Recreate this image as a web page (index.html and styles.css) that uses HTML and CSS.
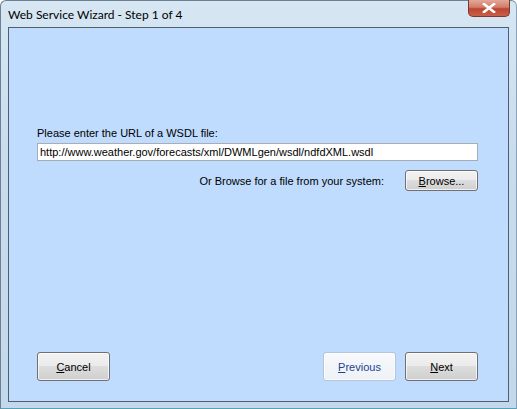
FILE: index.html
```html
<!DOCTYPE html>
<html lang="en">
<head>
  <meta charset="UTF-8">
  <title>Web Service Wizard</title>
  <link rel="stylesheet" href="styles.css">
</head>
<body>
  <div class="window">
    <div class="titlebar">
      <span class="title">Web Service Wizard - Step 1 of 4</span>
      <button class="close-btn" aria-label="Close">
        <svg width="14" height="10" viewBox="0 0 14 10">
          <path d="M2 1 L12 9 M12 1 L2 9" stroke="#fff" stroke-width="2.6" stroke-linecap="square"/>
        </svg>
      </button>
    </div>
    <div class="client">
      <div class="form">
        <label class="url-label" for="wsdl-url">Please enter the URL of a WSDL file:</label>
        <input class="url-input" type="text" id="wsdl-url" value="http://www.weather.gov/forecasts/xml/DWMLgen/wsdl/ndfdXML.wsdl">
        <div class="browse-row">
          <span>Or Browse for a file from your system:</span>
          <button class="btn btn-small"><u>B</u>rowse...</button>
        </div>
      </div>
      <div class="footer">
        <button class="btn"><u>C</u>ancel</button>
        <div class="nav-btns">
          <button class="btn btn-disabled"><u>P</u>revious</button>
          <button class="btn"><u>N</u>ext</button>
        </div>
      </div>
    </div>
  </div>
</body>
</html>
```

FILE: styles.css
```css
body {
  margin: 0;
  padding: 0;
  background-color: #ffffff;
  font-family: "Liberation Sans", Arial, sans-serif;
  font-size: 11px;
}

.window {
  width: 517px;
  height: 409px;
  box-sizing: border-box;
  display: flex;
  flex-direction: column;
  padding: 0 7px 6px 7px;
  background: linear-gradient(to bottom, #d6e6f3 0%, #c9dcec 40%, #c3d8ea 100%);
  border: 1px solid #6d7f92;
  border-radius: 6px 6px 0 0;
  border-bottom-color: #56a0b8;
  border-right-color: #8aa3b8;
}

.titlebar {
  height: 26px;
  display: flex;
  align-items: flex-start;
  justify-content: space-between;
}

.title {
  font-family: Lato, "Noto Sans", sans-serif;
  font-size: 12px;
  color: #000;
  margin-top: 6px;
}

.close-btn {
  width: 42px;
  height: 17px;
  margin-top: -1px;
  margin-right: -1px;
  padding: 0;
  border: 1px solid #7a3a30;
  border-top: none;
  border-radius: 0 0 5px 5px;
  background: linear-gradient(to bottom, #e3a999 0%, #d27d69 45%, #bd4530 55%, #c9604a 100%);
  display: flex;
  align-items: center;
  justify-content: center;
}

.client {
  flex: 1;
  border: 1px solid #4e5f70;
  background-color: #bfdbfd;
  display: flex;
  flex-direction: column;
  justify-content: space-between;
  padding: 0 30px 20px 28px;
}

.form {
  display: flex;
  flex-direction: column;
  margin-top: 99px;
}

.url-label {
  margin-bottom: 4px;
}

.url-input {
  height: 18px;
  box-sizing: border-box;
  border: 1px solid #a5acb5;
  border-top-color: #abadb3;
  padding: 0 2px;
  font-family: "Liberation Sans", Arial, sans-serif;
  font-size: 11px;
  color: #000;
  background: #fff;
}

.browse-row {
  display: flex;
  justify-content: flex-end;
  align-items: center;
  gap: 21px;
  margin-top: 9px;
}

.btn {
  width: 73px;
  height: 29px;
  font-family: "Liberation Sans", Arial, sans-serif;
  font-size: 11px;
  color: #000;
  border: 1px solid #707070;
  border-radius: 3px;
  background: linear-gradient(to bottom, #f2f2f2 0%, #ebebeb 48%, #dddddd 50%, #cfcfcf 100%);
  box-shadow: inset 0 0 0 1px rgba(255, 255, 255, 0.7);
  padding: 0;
}

.btn-small {
  height: 21px;
  width: 73px;
}

.btn-disabled {
  color: #1c3f94;
  border-color: #b4c6d8;
  background: linear-gradient(to bottom, #f7f9fb 0%, #eef2f6 100%);
}

.footer {
  display: flex;
  justify-content: space-between;
  align-items: center;
}

.nav-btns {
  display: flex;
  gap: 9px;
}
```
